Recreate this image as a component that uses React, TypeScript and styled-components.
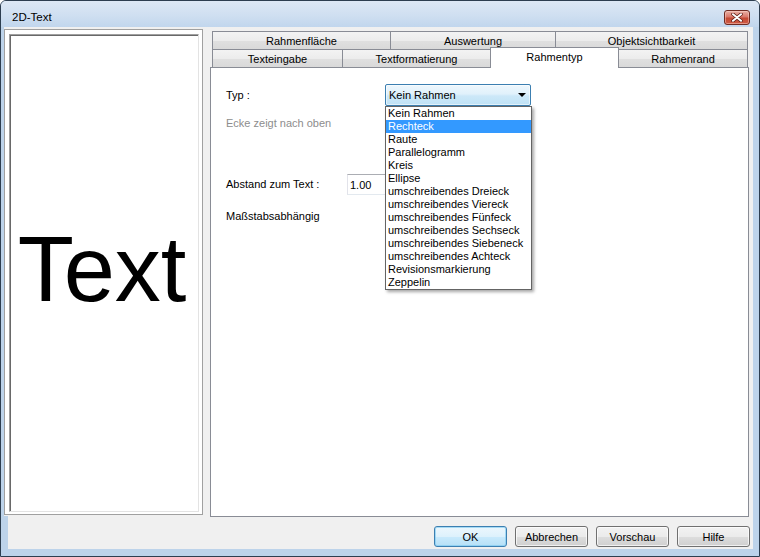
import React from "react";
import styled, { createGlobalStyle } from "styled-components";

const Global = createGlobalStyle`
  html, body { margin: 0; padding: 0; background: #ffffff; }
  body { font-family: "Liberation Sans", Arial, sans-serif; font-size: 11px; color: #000; }
  * { box-sizing: border-box; }
`;

const Window = styled.div`
  width: 760px;
  height: 557px;
  display: flex;
  flex-direction: column;
  border: 1px solid #2d3e50;
  border-radius: 6px 6px 0 0;
  background: #bdd3ea;
  overflow: hidden;
`;

const TitleBar = styled.div`
  height: 26px;
  flex: none;
  display: flex;
  align-items: flex-start;
  justify-content: space-between;
  padding: 9px 9px 0 11px;
  background: linear-gradient(to bottom, #dde8f5 0%, #cfdff1 55%, #c1d6ed 100%);
`;

const Title = styled.div`
  font-family: "Liberation Sans", Arial, sans-serif;
  font-size: 11.5px;
  line-height: 15px;
  color: #000;
`;

const CloseButton = styled.div`
  width: 26px;
  height: 15px;
  border: 1px solid #6e2b22;
  border-radius: 3px;
  background: linear-gradient(to bottom, #e9b1a6 0%, #d9786a 45%, #c44a35 55%, #cf5a43 100%);
  box-shadow: inset 0 0 0 1px rgba(255, 220, 210, 0.45);
  display: flex;
  align-items: center;
  justify-content: center;
`;

const Frame = styled.div`
  flex: 1;
  display: flex;
  padding: 0 6px 7px 3px;
`;

const Client = styled.div`
  flex: 1;
  display: flex;
  flex-direction: column;
  background: #f0f0f0;
`;

const Main = styled.div`
  height: 489px;
  flex: none;
  display: flex;
  align-items: flex-start;
`;

const PreviewFrame = styled.div`
  margin-top: 2px;
  width: 199px;
  height: 486px;
  border: 1px solid #a0a0a0;
  background: #ffffff;
  padding: 4px 3px 2px 4px;
  display: flex;
`;

const PreviewInner = styled.div`
  flex: 1;
  display: flex;
  align-items: center;
  justify-content: center;
  border-top: 1px solid #a0a0a0;
  border-left: 1px solid #a0a0a0;
  border-right: 1px solid #e3e3e3;
  border-bottom: 1px solid #e3e3e3;
  box-shadow: inset 1px 1px 0 #696969;
  background: #ffffff;
`;

const PreviewText = styled.div`
  font-family: "Liberation Sans", Arial, sans-serif;
  font-size: 92px;
  line-height: 1;
  color: #000;
  margin-top: -8px;
  margin-left: -4px;
`;

const TabControl = styled.div`
  margin: 4px 0 0 7px;
  width: 539px;
  height: 486px;
  display: flex;
  flex-direction: column;
`;

const TabRow = styled.div`
  height: 18px;
  flex: none;
  display: flex;
  align-items: flex-start;
  padding-left: 2px;
`;

const Tab = styled.div<{ $w: number; $active?: boolean }>`
  width: ${(p) => p.$w}px;
  height: ${(p) => (p.$active ? 21 : 18)}px;
  margin-top: ${(p) => (p.$active ? -2 : 0)}px;
  margin-left: -1px;
  &:first-child { margin-left: 0; }
  position: relative;
  z-index: ${(p) => (p.$active ? 2 : 1)};
  border: 1px solid #898c95;
  border-bottom: none;
  background: ${(p) =>
    p.$active
      ? "#ffffff"
      : "linear-gradient(to bottom, #f3f3f3 0%, #ececec 50%, #e0e0e0 51%, #d9d9d9 100%)"};
  display: flex;
  align-items: ${(p) => (p.$active ? "flex-start" : "center")};
  padding-top: ${(p) => (p.$active ? 3 : 0)}px;
  justify-content: center;
  font-size: 11px;
  white-space: nowrap;
`;

const TabPanel = styled.div`
  flex: 1;
  border: 1px solid #898c95;
  background: #ffffff;
  padding: 16px 0 0 15px;
  display: flex;
  flex-direction: column;
`;

const FieldRow = styled.div<{ $h: number; $mt: number }>`
  height: ${(p) => p.$h}px;
  margin-top: ${(p) => p.$mt}px;
  display: flex;
  align-items: center;
`;

const Label = styled.div<{ $w?: number; $disabled?: boolean }>`
  width: ${(p) => (p.$w ? `${p.$w}px` : "auto")};
  color: ${(p) => (p.$disabled ? "#8d8d8d" : "#000")};
  line-height: 13px;
  white-space: nowrap;
`;

const ComboWrap = styled.div`
  position: relative;
  width: 146px;
  height: 22px;
`;

const ComboBox = styled.div`
  width: 100%;
  height: 100%;
  border: 1px solid #3c7fb1;
  border-radius: 2px;
  background: linear-gradient(to bottom, #eef7fd 0%, #e0f1fb 45%, #cce8f8 55%, #bfe2f6 100%);
  box-shadow: inset 0 0 0 1px rgba(255, 255, 255, 0.55);
  display: flex;
  align-items: center;
  justify-content: space-between;
  padding: 0 4px 0 3px;
`;

const Arrow = styled.div`
  width: 0;
  height: 0;
  border-left: 4px solid transparent;
  border-right: 4px solid transparent;
  border-top: 4px solid #000;
`;

const DropList = styled.div`
  position: absolute;
  top: 22px;
  left: 0;
  width: 147px;
  border: 1px solid #646464;
  background: #ffffff;
  box-shadow: 2px 2px 3px rgba(0, 0, 0, 0.35);
  z-index: 10;
`;

const ListItem = styled.div<{ $sel?: boolean }>`
  height: 13px;
  line-height: 13px;
  padding-left: 2px;
  white-space: nowrap;
  background: ${(p) => (p.$sel ? "#3399ff" : "transparent")};
  color: ${(p) => (p.$sel ? "#ffffff" : "#000")};
`;

const TextInput = styled.div`
  width: 64px;
  height: 21px;
  border: 1px solid #abadb3;
  border-color: #abadb3 #dbdfe6 #e3e9ef #e2e3ea;
  background: #fff;
  display: flex;
  align-items: center;
  padding-left: 2px;
`;

const ButtonBar = styled.div`
  flex: 1;
  display: flex;
  justify-content: flex-end;
  align-items: flex-start;
  gap: 8px;
  padding: 10px 3px 0 0;
  border-left: 4px solid #bdd3ea;
`;

const Button = styled.div<{ $default?: boolean }>`
  width: 73px;
  height: 21px;
  border: 1px solid ${(p) => (p.$default ? "#3c7fb1" : "#707070")};
  border-radius: 3px;
  background: ${(p) =>
    p.$default
      ? "linear-gradient(to bottom, #ecf7fd 0%, #ddf1fc 50%, #c9eafc 51%, #b6e0f7 100%)"
      : "linear-gradient(to bottom, #f2f2f2 0%, #ebebeb 50%, #dddddd 51%, #cfcfcf 100%)"};
  box-shadow: inset 0 0 0 1px ${(p) => (p.$default ? "rgba(120,200,240,0.6)" : "rgba(255,255,255,0.7)")};
  display: flex;
  align-items: center;
  justify-content: center;
  font-size: 11px;
`;

const items = [
  "Kein Rahmen",
  "Rechteck",
  "Raute",
  "Parallelogramm",
  "Kreis",
  "Ellipse",
  "umschreibendes Dreieck",
  "umschreibendes Viereck",
  "umschreibendes Fünfeck",
  "umschreibendes Sechseck",
  "umschreibendes Siebeneck",
  "umschreibendes Achteck",
  "Revisionsmarkierung",
  "Zeppelin",
];

export default function App() {
  return (
    <>
      <Global />
      <Window>
        <TitleBar>
          <Title>2D-Text</Title>
          <CloseButton>
            <svg width="12" height="9" viewBox="0 0 12 9">
              <path d="M2 1.2 L10 7.8 M10 1.2 L2 7.8" stroke="#5a1e16" strokeWidth="3.4" strokeLinecap="round" />
              <path d="M2 1.2 L10 7.8 M10 1.2 L2 7.8" stroke="#ffffff" strokeWidth="2" strokeLinecap="round" />
            </svg>
          </CloseButton>
        </TitleBar>
        <Frame>
          <Client>
            <Main>
              <PreviewFrame>
                <PreviewInner>
                  <PreviewText>Text</PreviewText>
                </PreviewInner>
              </PreviewFrame>
              <TabControl>
                <TabRow>
                  <Tab $w={179}>Rahmenfläche</Tab>
                  <Tab $w={166}>Auswertung</Tab>
                  <Tab $w={193}>Objektsichtbarkeit</Tab>
                </TabRow>
                <TabRow>
                  <Tab $w={131}>Texteingabe</Tab>
                  <Tab $w={149}>Textformatierung</Tab>
                  <Tab $w={129} $active>Rahmentyp</Tab>
                  <Tab $w={130}>Rahmenrand</Tab>
                </TabRow>
                <TabPanel>
                  <FieldRow $h={22} $mt={0}>
                    <Label $w={159}>Typ :</Label>
                    <ComboWrap>
                      <ComboBox>
                        <span>Kein Rahmen</span>
                        <Arrow />
                      </ComboBox>
                      <DropList>
                        {items.map((it, i) => (
                          <ListItem key={it} $sel={i === 1}>
                            {it}
                          </ListItem>
                        ))}
                      </DropList>
                    </ComboWrap>
                  </FieldRow>
                  <FieldRow $h={13} $mt={11}>
                    <Label $disabled>Ecke zeigt nach oben</Label>
                  </FieldRow>
                  <FieldRow $h={21} $mt={44}>
                    <Label $w={121}>Abstand zum Text :</Label>
                    <TextInput>1.00</TextInput>
                  </FieldRow>
                  <FieldRow $h={13} $mt={15}>
                    <Label>Maßstabsabhängig</Label>
                  </FieldRow>
                </TabPanel>
              </TabControl>
            </Main>
            <ButtonBar>
              <Button $default>OK</Button>
              <Button>Abbrechen</Button>
              <Button>Vorschau</Button>
              <Button>Hilfe</Button>
            </ButtonBar>
          </Client>
        </Frame>
      </Window>
    </>
  );
}
